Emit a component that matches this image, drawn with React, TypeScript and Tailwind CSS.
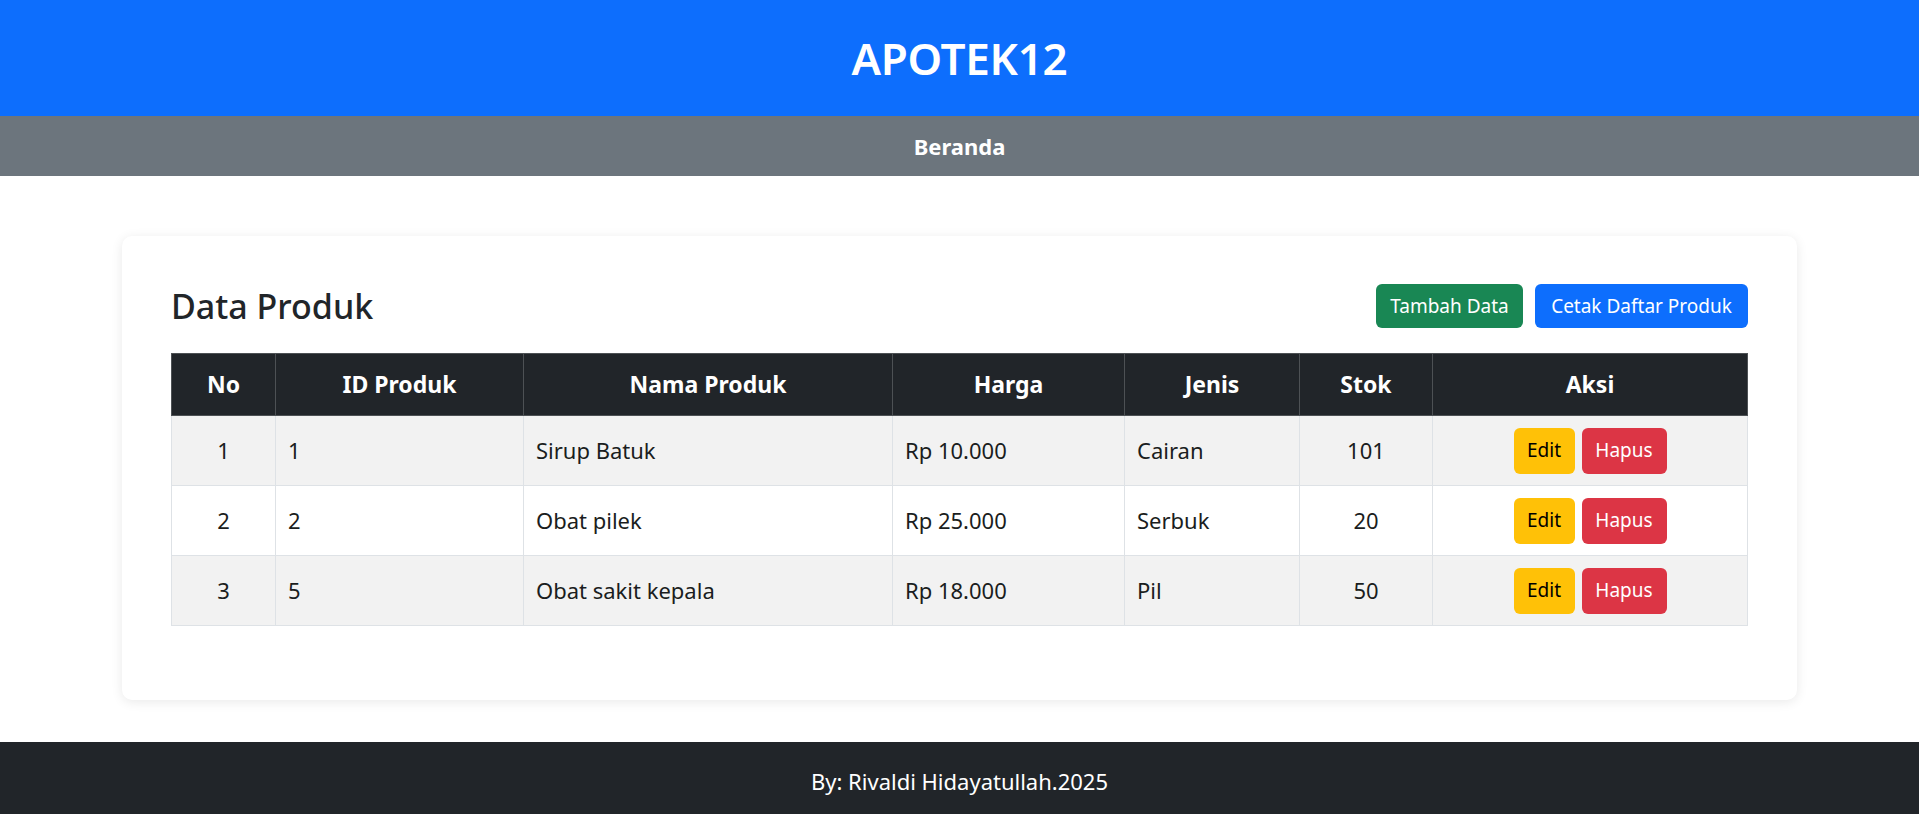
import React from "react";

const rows = [
  { no: 1, id: 1, nama: "Sirup Batuk", harga: "Rp 10.000", jenis: "Cairan", stok: 101 },
  { no: 2, id: 2, nama: "Obat pilek", harga: "Rp 25.000", jenis: "Serbuk", stok: 20 },
  { no: 3, id: 5, nama: "Obat sakit kepala", harga: "Rp 18.000", jenis: "Pil", stok: 50 },
];

export default function App() {
  return (
    <div className="min-h-[814px] flex flex-col bg-white text-[#212529]" style={{ fontFamily: '"Noto Sans", "Open Sans", sans-serif' }}>
      <header className="h-[116px] bg-[#0d6efd] flex items-center justify-center">
        <h1 className="text-white text-[44px] font-semibold leading-none tracking-[-0.3px]">APOTEK12</h1>
      </header>
      <nav className="h-[60px] bg-[#6c757d] flex items-center justify-center">
        <span className="text-white text-[22px] font-bold">Beranda</span>
      </nav>

      <main className="flex-1 px-[122px] pt-[60px] pb-[42px]">
        <div className="bg-white rounded-[10px] shadow-[0_2px_12px_rgba(0,0,0,0.09)] px-[49px] pt-[48px] pb-[74px]">
          <div className="flex items-center justify-between h-[44px] mb-[25px]">
            <h3 className="text-[34px] font-medium leading-none">Data Produk</h3>
            <div className="flex gap-[12px]">
              <button className="w-[147px] h-[44px] rounded-[6px] bg-[#198754] text-white text-[19px] flex items-center justify-center">Tambah Data</button>
              <button className="w-[213px] h-[44px] rounded-[6px] bg-[#0d6efd] text-white text-[19px] flex items-center justify-center">Cetak Daftar Produk</button>
            </div>
          </div>

          <table className="w-full table-fixed border-collapse text-[22px] text-[#1a1d20]">
            <colgroup>
              <col className="w-[104px]" />
              <col className="w-[248px]" />
              <col className="w-[369px]" />
              <col className="w-[232px]" />
              <col className="w-[175px]" />
              <col className="w-[133px]" />
              <col />
            </colgroup>
            <thead>
              <tr className="h-[62px] bg-[#212529] text-white">
                {["No", "ID Produk", "Nama Produk", "Harga", "Jenis", "Stok", "Aksi"].map((h) => (
                  <th key={h} className="border border-[#4d5154] font-bold text-[23px] text-center px-[12px]">{h}</th>
                ))}
              </tr>
            </thead>
            <tbody>
              {rows.map((r, i) => (
                <tr key={r.no} className={`h-[70px] ${i % 2 === 0 ? "bg-[#f2f2f2]" : "bg-white"}`}>
                  <td className="border border-[#dee2e6] text-center px-[12px]">{r.no}</td>
                  <td className="border border-[#dee2e6] px-[12px]">{r.id}</td>
                  <td className="border border-[#dee2e6] px-[12px]">{r.nama}</td>
                  <td className="border border-[#dee2e6] px-[12px]">{r.harga}</td>
                  <td className="border border-[#dee2e6] px-[12px]">{r.jenis}</td>
                  <td className="border border-[#dee2e6] text-center px-[12px]">{r.stok}</td>
                  <td className="border border-[#dee2e6] px-[12px]">
                    <div className="flex items-center justify-center gap-[7px]">
                      <button className="w-[61px] h-[46px] rounded-[6px] bg-[#ffc107] text-black text-[19px] flex items-center justify-center">Edit</button>
                      <button className="w-[85px] h-[46px] rounded-[6px] bg-[#dc3545] text-white text-[19px] flex items-center justify-center">Hapus</button>
                    </div>
                  </td>
                </tr>
              ))}
            </tbody>
          </table>
        </div>
      </main>

      <footer className="h-[73px] bg-[#212529] text-white flex justify-center pt-[24px] overflow-hidden">
        <span className="text-[22px] leading-[30px]">By: Rivaldi Hidayatullah.2025</span>
      </footer>
    </div>
  );
}
